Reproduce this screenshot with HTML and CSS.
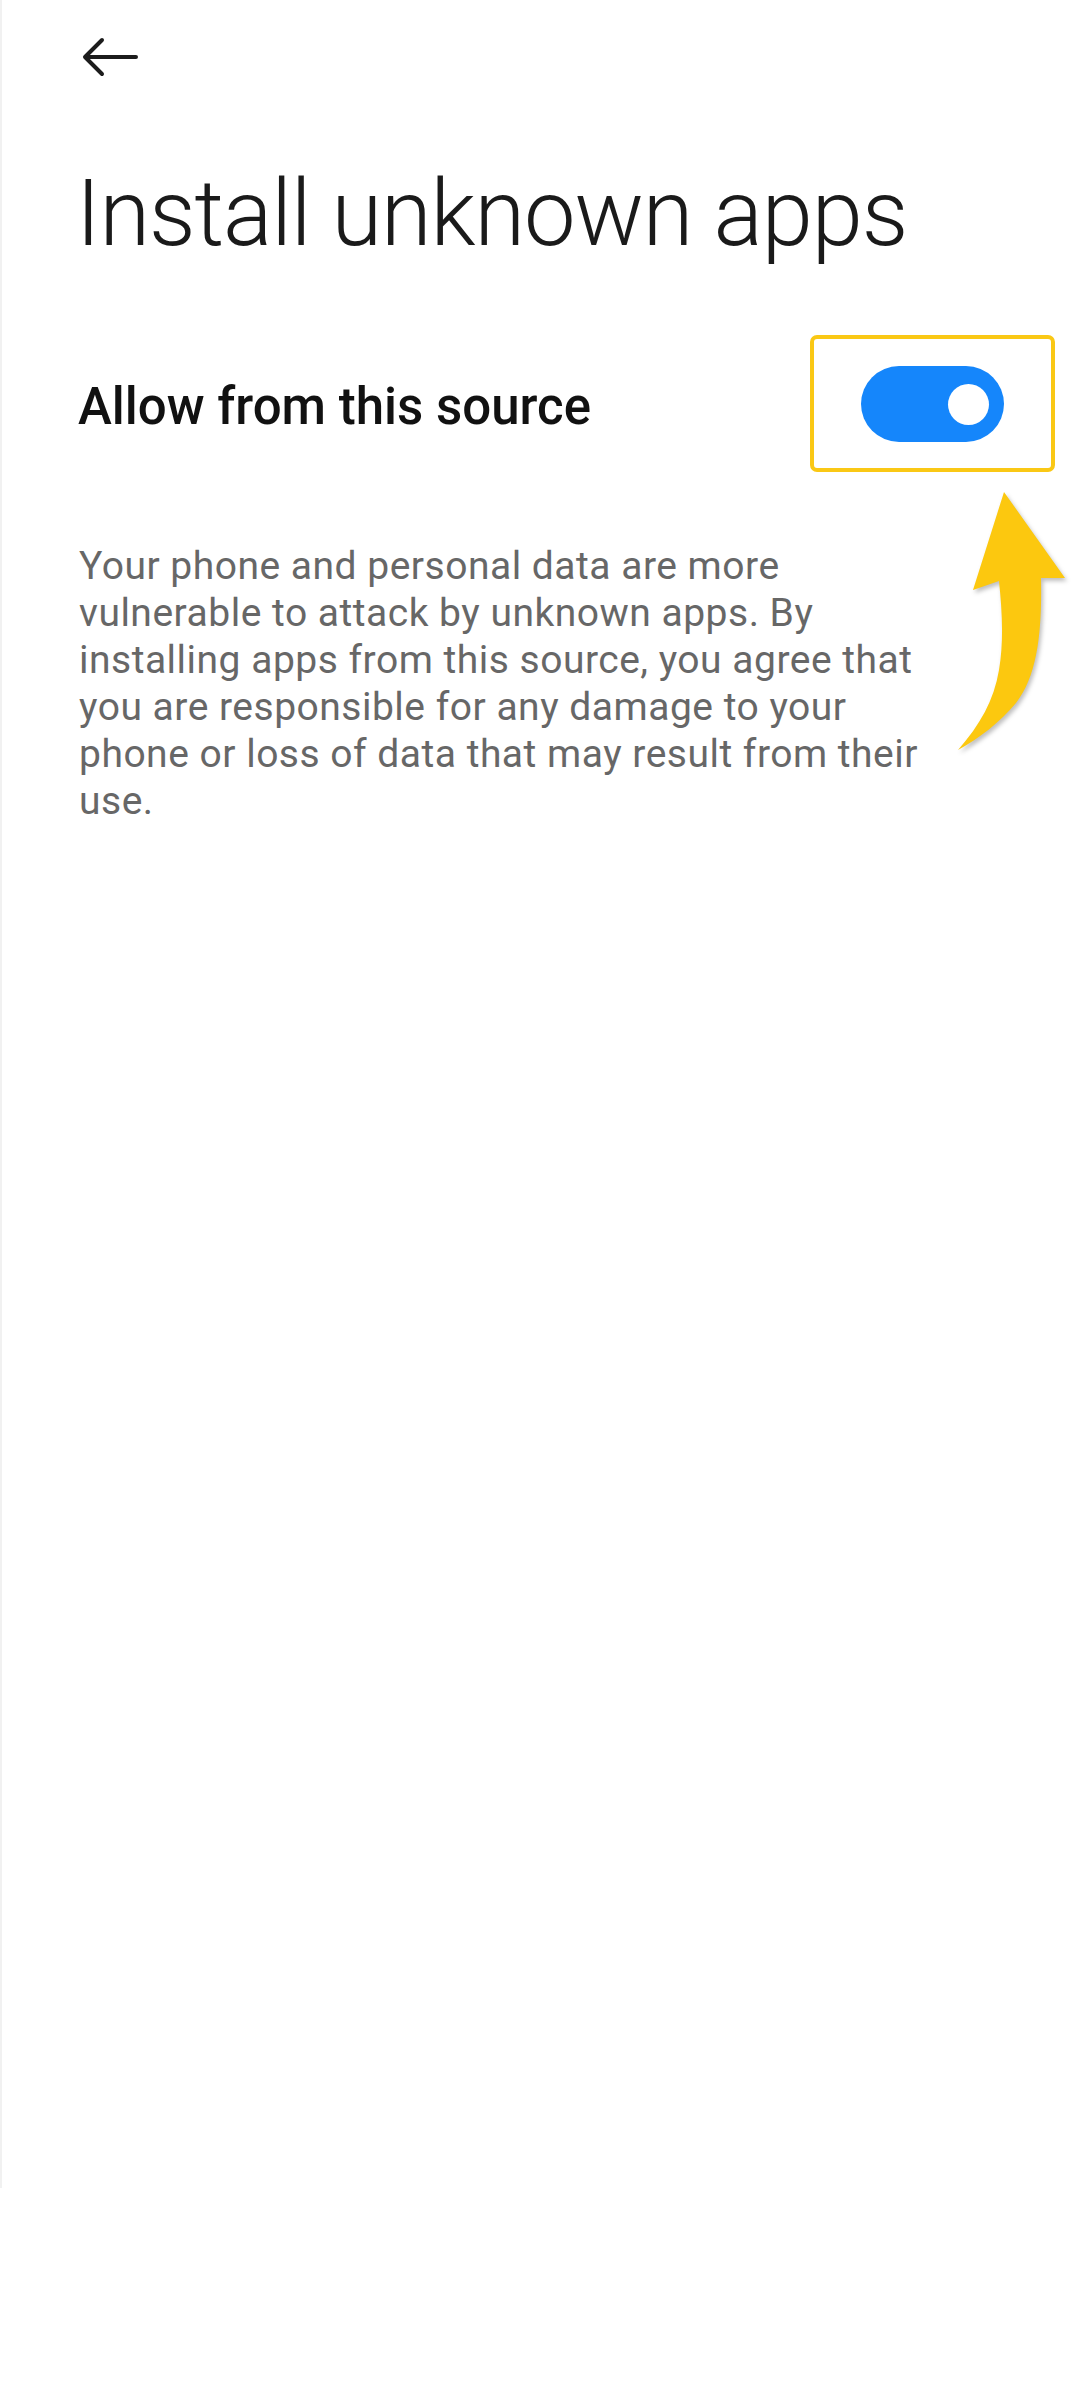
FILE: index.html
```html
<!DOCTYPE html>
<html lang="en">
<head>
  <meta charset="UTF-8">
  <title>Install unknown apps</title>
  <link rel="stylesheet" href="styles.css">
</head>
<body>
  <div class="screen">
    <div class="topbar">
      <svg class="back" width="56" height="40" viewBox="0 0 56 40">
        <path d="M54 20 H4 M20 3 L3 20 L20 37" fill="none" stroke="#1c1c1c" stroke-width="4" stroke-linecap="round" stroke-linejoin="round"/>
      </svg>
    </div>

    <h1 class="title">Install unknown apps</h1>

    <div class="setting">
      <span class="setting-label">Allow from this source</span>
      <div class="toggle on"><span class="knob"></span></div>
    </div>

    <p class="note">Your phone and personal data are more vulnerable to attack by unknown apps. By installing apps from this source, you agree that you are responsible for any damage to your phone or loss of data that may result from their use.</p>

    <!-- tutorial highlight -->
    <div class="highlight"></div>
    <svg class="pointer" width="140" height="280" viewBox="0 0 140 280">
      <path d="M62 12 L123 98 L99 98 C100 150 96 195 74 223 C58 242 38 258 16 270 C38 245 52 220 57 190 C62 160 60 130 57 101 L31 110 Z" fill="#fcc80f"/>
    </svg>
  </div>
</body>
</html>
```

FILE: styles.css
```css
body {
  margin: 0;
  background-color: #fff;
  font-family: Roboto, "Noto Sans", sans-serif;
}
.screen {
  position: relative;
  height: 2188px;
  border-left: 2px solid #f1f1f1;
}
.topbar {
  padding: 37px 0 0 80px;
  height: 40px;
}
.back {
  display: block;
}
.title {
  margin: 91px 0 0 74px;
  font-size: 92px;
  font-weight: 300;
  line-height: 92px;
  letter-spacing: -1.1px;
  color: #1a1a1a;
}
.setting {
  display: flex;
  justify-content: space-between;
  align-items: center;
  margin-top: 106px;
  padding: 0 76px 0 76px;
}
.setting-label {
  font-size: 51px;
  font-weight: 500;
  color: #111;
  padding-top: 5px;
}
.toggle {
  width: 143px;
  height: 76px;
  border-radius: 38px;
  background-color: #d6d6d6;
  display: flex;
  align-items: center;
  justify-content: flex-end;
  padding-right: 15px;
  box-sizing: border-box;
}
.toggle.on {
  background-color: #1586fb;
}
.knob {
  width: 41px;
  height: 41px;
  border-radius: 50%;
  background-color: #fff;
}
.note {
  margin: 101px 0 0;
  padding: 0 125px 0 77px;
  font-size: 39px;
  line-height: 47px;
  letter-spacing: 0.5px;
  color: #676767;
}
.highlight {
  position: absolute;
  left: 808px;
  top: 335px;
  width: 237px;
  height: 129px;
  border: 4px solid #fac815;
  border-radius: 7px;
}
.pointer {
  position: absolute;
  left: 940px;
  top: 480px;
  filter: drop-shadow(2px 3px 2px rgba(0, 0, 0, 0.25));
}
```
